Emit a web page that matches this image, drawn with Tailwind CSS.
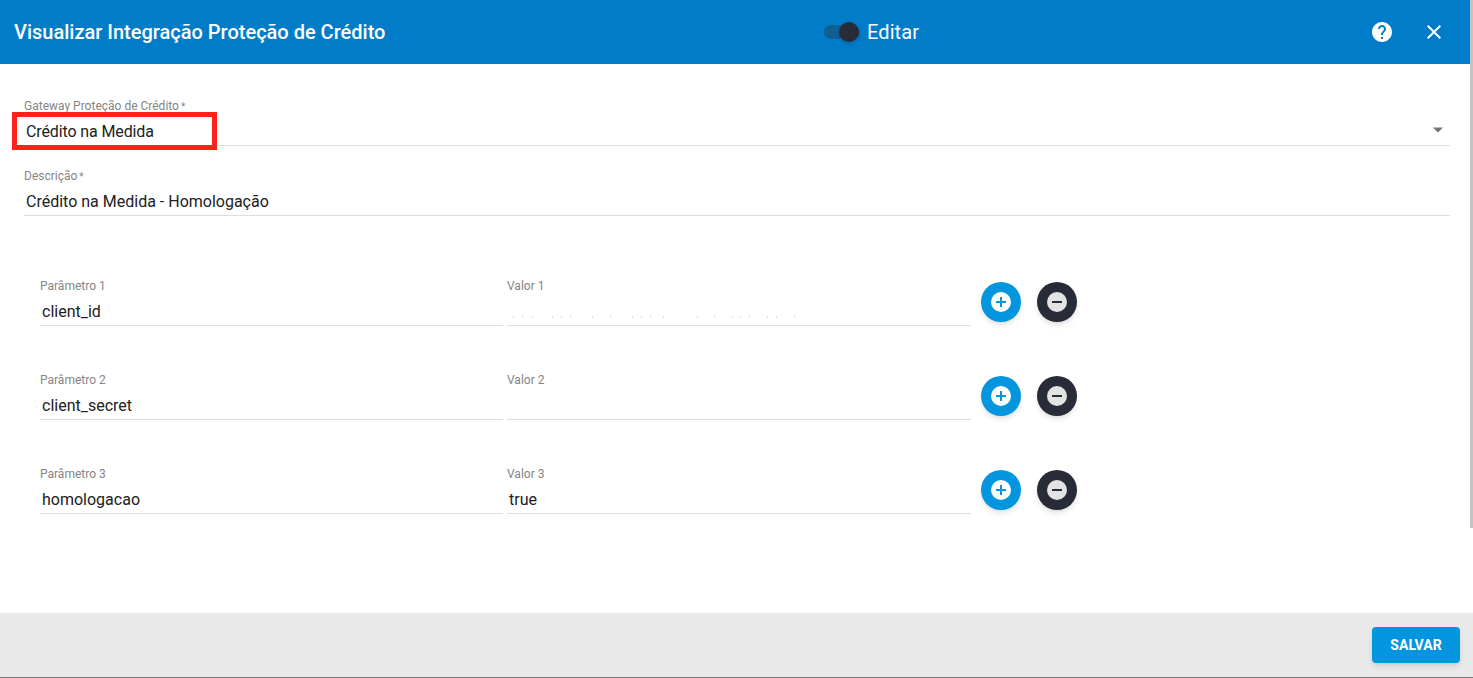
<!DOCTYPE html>
<html lang="pt-BR">
<head>
<meta charset="utf-8">
<title>Visualizar Integração Proteção de Crédito</title>
<script src="https://cdn.jsdelivr.net/npm/@tailwindcss/browser@4"></script>
</head>
<body class="font-['Roboto',sans-serif] bg-white">
<div class="relative w-[1473px] h-[678px] flex flex-col overflow-hidden">
  <header class="h-16 shrink-0 bg-[#017cc9] flex items-center text-white pl-[14px]">
    <h1 class="w-[810px] text-[20px] font-medium leading-none">Visualizar Integração Proteção de Crédito</h1>
    <div class="relative w-[43px] h-[24px]">
      <div class="absolute left-0 top-[5px] w-[36px] h-[14px] rounded-full bg-[#125f94]"></div>
      <div class="absolute left-[15px] top-[2px] w-[20px] h-[20px] rounded-full bg-[#282c38] shadow-md"></div>
    </div>
    <span class="text-[20px] leading-none tracking-[0.1px]">Editar</span>
    <svg class="ml-[451px] w-6 h-6" viewBox="0 0 24 24" fill="#fff"><path d="M12 2C6.48 2 2 6.48 2 12s4.48 10 10 10 10-4.48 10-10S17.52 2 12 2zm1 17h-2v-2h2v2zm2.07-7.75l-.9.92C13.45 12.9 13 13.5 13 15h-2v-.5c0-1.1.45-2.1 1.17-2.83l1.24-1.26c.37-.36.59-.86.59-1.41 0-1.1-.9-2-2-2s-2 .9-2 2H8c0-2.21 1.79-4 4-4s4 1.79 4 4c0 .88-.36 1.68-.93 2.25z"/></svg>
    <svg class="ml-[28px] w-6 h-6" viewBox="0 0 24 24" fill="#fff"><path d="M19 6.41L17.59 5 12 10.59 6.41 5 5 6.41 10.59 12 5 17.59 6.41 19 12 13.41 17.59 19 19 17.59 13.41 12z"/></svg>
  </header>

  <main class="flex-1 pl-[24px] pr-[23px] pt-[34px]">
    <div class="relative h-[48px] pt-[1px] border-b border-[#dedede]">
      <label class="block text-[12px] leading-[14px] text-[#858585]">Gateway Proteção de Crédito<span class="ml-[2px] text-[10px]">*</span></label>
      <div class="pl-[2px] pt-[8px] text-[16px] leading-[19px] tracking-[-0.12px] text-[#212121]">Crédito na Medida</div>
      <svg class="absolute right-[6px] top-[29px] w-[12px] h-[6px]" viewBox="0 0 12 6" fill="#757575"><path d="M1 0.5h10L6 5.5z"/></svg>
    </div>
    <div class="h-[48px] mt-[22px] pt-[1px] border-b border-[#dedede]">
      <label class="block text-[12px] leading-[14px] text-[#858585]">Descrição<span class="ml-[2px] text-[10px]">*</span></label>
      <div class="pl-[2px] pt-[8px] text-[16px] leading-[19px] text-[#212121]">Crédito na Medida - Homologação</div>
    </div>

    <div class="pl-[16px] pt-[62px] flex flex-col gap-[46px]">
      <div class="flex items-start h-[48px]">
        <div class="w-[463px] h-[48px] pt-[1px] border-b border-[#dedede]">
          <label class="block text-[12px] leading-[14px] text-[#858585]">Parâmetro 1</label>
          <div class="pl-[2px] pt-[9px] text-[16px] leading-[19px] text-[#212121]">client_id</div>
        </div>
        <div class="ml-[4px] w-[464px] h-[48px] pt-[1px] border-b border-[#dedede]">
          <label class="block text-[12px] leading-[14px] text-[#858585]">Valor 1</label>
          <svg class="mt-[23px] block" width="300" height="2" viewBox="0 0 300 2" fill="#cfcfcf" aria-hidden="true"><rect x="6" width="1" height="1.5"/><rect x="15" width="1" height="1.5"/><rect x="25" width="1" height="1.5"/><rect x="45" width="1" height="1.5"/><rect x="54" width="1" height="1.5"/><rect x="63" width="1" height="1.5"/><rect x="85" width="1" height="1.5"/><rect x="103" width="1" height="1.5"/><rect x="125" width="1" height="1.5"/><rect x="134" width="1" height="1.5"/><rect x="143" width="1" height="1.5"/><rect x="156" width="1" height="1.5"/><rect x="190" width="1" height="1.5"/><rect x="207" width="1" height="1.5"/><rect x="225" width="1" height="1.5"/><rect x="233" width="1" height="1.5"/><rect x="242" width="1" height="1.5"/><rect x="260" width="1" height="1.5"/><rect x="269" width="1" height="1.5"/><rect x="287" width="1" height="1.5"/></svg>
        </div>
        <button class="ml-[10px] mt-[4px] w-10 h-10 rounded-full bg-[#0495df] shadow-md flex items-center justify-center">
          <svg class="w-6 h-6" viewBox="0 0 24 24"><circle cx="12" cy="12" r="10" fill="#fff"/><path d="M11 7h2v4h4v2h-4v4h-2v-4H7v-2h4z" fill="#0495df"/></svg>
        </button>
        <button class="ml-[16px] mt-[4px] w-10 h-10 rounded-full bg-[#282c38] shadow-md flex items-center justify-center">
          <svg class="w-6 h-6" viewBox="0 0 24 24"><circle cx="12" cy="12" r="10" fill="#e3e3e3"/><path d="M7 11h10v2H7z" fill="#282c38"/></svg>
        </button>
      </div>
      <div class="flex items-start h-[48px]">
        <div class="w-[463px] h-[48px] pt-[1px] border-b border-[#dedede]">
          <label class="block text-[12px] leading-[14px] text-[#858585]">Parâmetro 2</label>
          <div class="pl-[2px] pt-[9px] text-[16px] leading-[19px] text-[#212121]">client_secret</div>
        </div>
        <div class="ml-[4px] w-[464px] h-[48px] pt-[1px] border-b border-[#dedede]">
          <label class="block text-[12px] leading-[14px] text-[#858585]">Valor 2</label>
        </div>
        <button class="ml-[10px] mt-[4px] w-10 h-10 rounded-full bg-[#0495df] shadow-md flex items-center justify-center">
          <svg class="w-6 h-6" viewBox="0 0 24 24"><circle cx="12" cy="12" r="10" fill="#fff"/><path d="M11 7h2v4h4v2h-4v4h-2v-4H7v-2h4z" fill="#0495df"/></svg>
        </button>
        <button class="ml-[16px] mt-[4px] w-10 h-10 rounded-full bg-[#282c38] shadow-md flex items-center justify-center">
          <svg class="w-6 h-6" viewBox="0 0 24 24"><circle cx="12" cy="12" r="10" fill="#e3e3e3"/><path d="M7 11h10v2H7z" fill="#282c38"/></svg>
        </button>
      </div>
      <div class="flex items-start h-[48px]">
        <div class="w-[463px] h-[48px] pt-[1px] border-b border-[#dedede]">
          <label class="block text-[12px] leading-[14px] text-[#858585]">Parâmetro 3</label>
          <div class="pl-[2px] pt-[9px] text-[16px] leading-[19px] text-[#212121]">homologacao</div>
        </div>
        <div class="ml-[4px] w-[464px] h-[48px] pt-[1px] border-b border-[#dedede]">
          <label class="block text-[12px] leading-[14px] text-[#858585]">Valor 3</label>
          <div class="pl-[2px] pt-[9px] text-[16px] leading-[19px] text-[#212121]">true</div>
        </div>
        <button class="ml-[10px] mt-[4px] w-10 h-10 rounded-full bg-[#0495df] shadow-md flex items-center justify-center">
          <svg class="w-6 h-6" viewBox="0 0 24 24"><circle cx="12" cy="12" r="10" fill="#fff"/><path d="M11 7h2v4h4v2h-4v4h-2v-4H7v-2h4z" fill="#0495df"/></svg>
        </button>
        <button class="ml-[16px] mt-[4px] w-10 h-10 rounded-full bg-[#282c38] shadow-md flex items-center justify-center">
          <svg class="w-6 h-6" viewBox="0 0 24 24"><circle cx="12" cy="12" r="10" fill="#e3e3e3"/><path d="M7 11h10v2H7z" fill="#282c38"/></svg>
        </button>
      </div>
    </div>
  </main>

  <footer class="h-[65px] shrink-0 bg-[#e9e9e9] border-b border-[#777] flex items-start justify-end pr-[13px] pt-[14px]">
    <button class="w-[88px] h-[36px] rounded bg-[#0495df] text-white text-[14px] font-bold shadow-md">SALVAR</button>
  </footer>

  <div class="absolute left-[12px] top-[112px] w-[205px] h-[38px] border-[5px] border-[#ff2119]"></div>
  <div class="absolute right-0 top-0 w-[3px] h-[528px] bg-[#c4c4c4]"></div>
</div>
</body>
</html>
